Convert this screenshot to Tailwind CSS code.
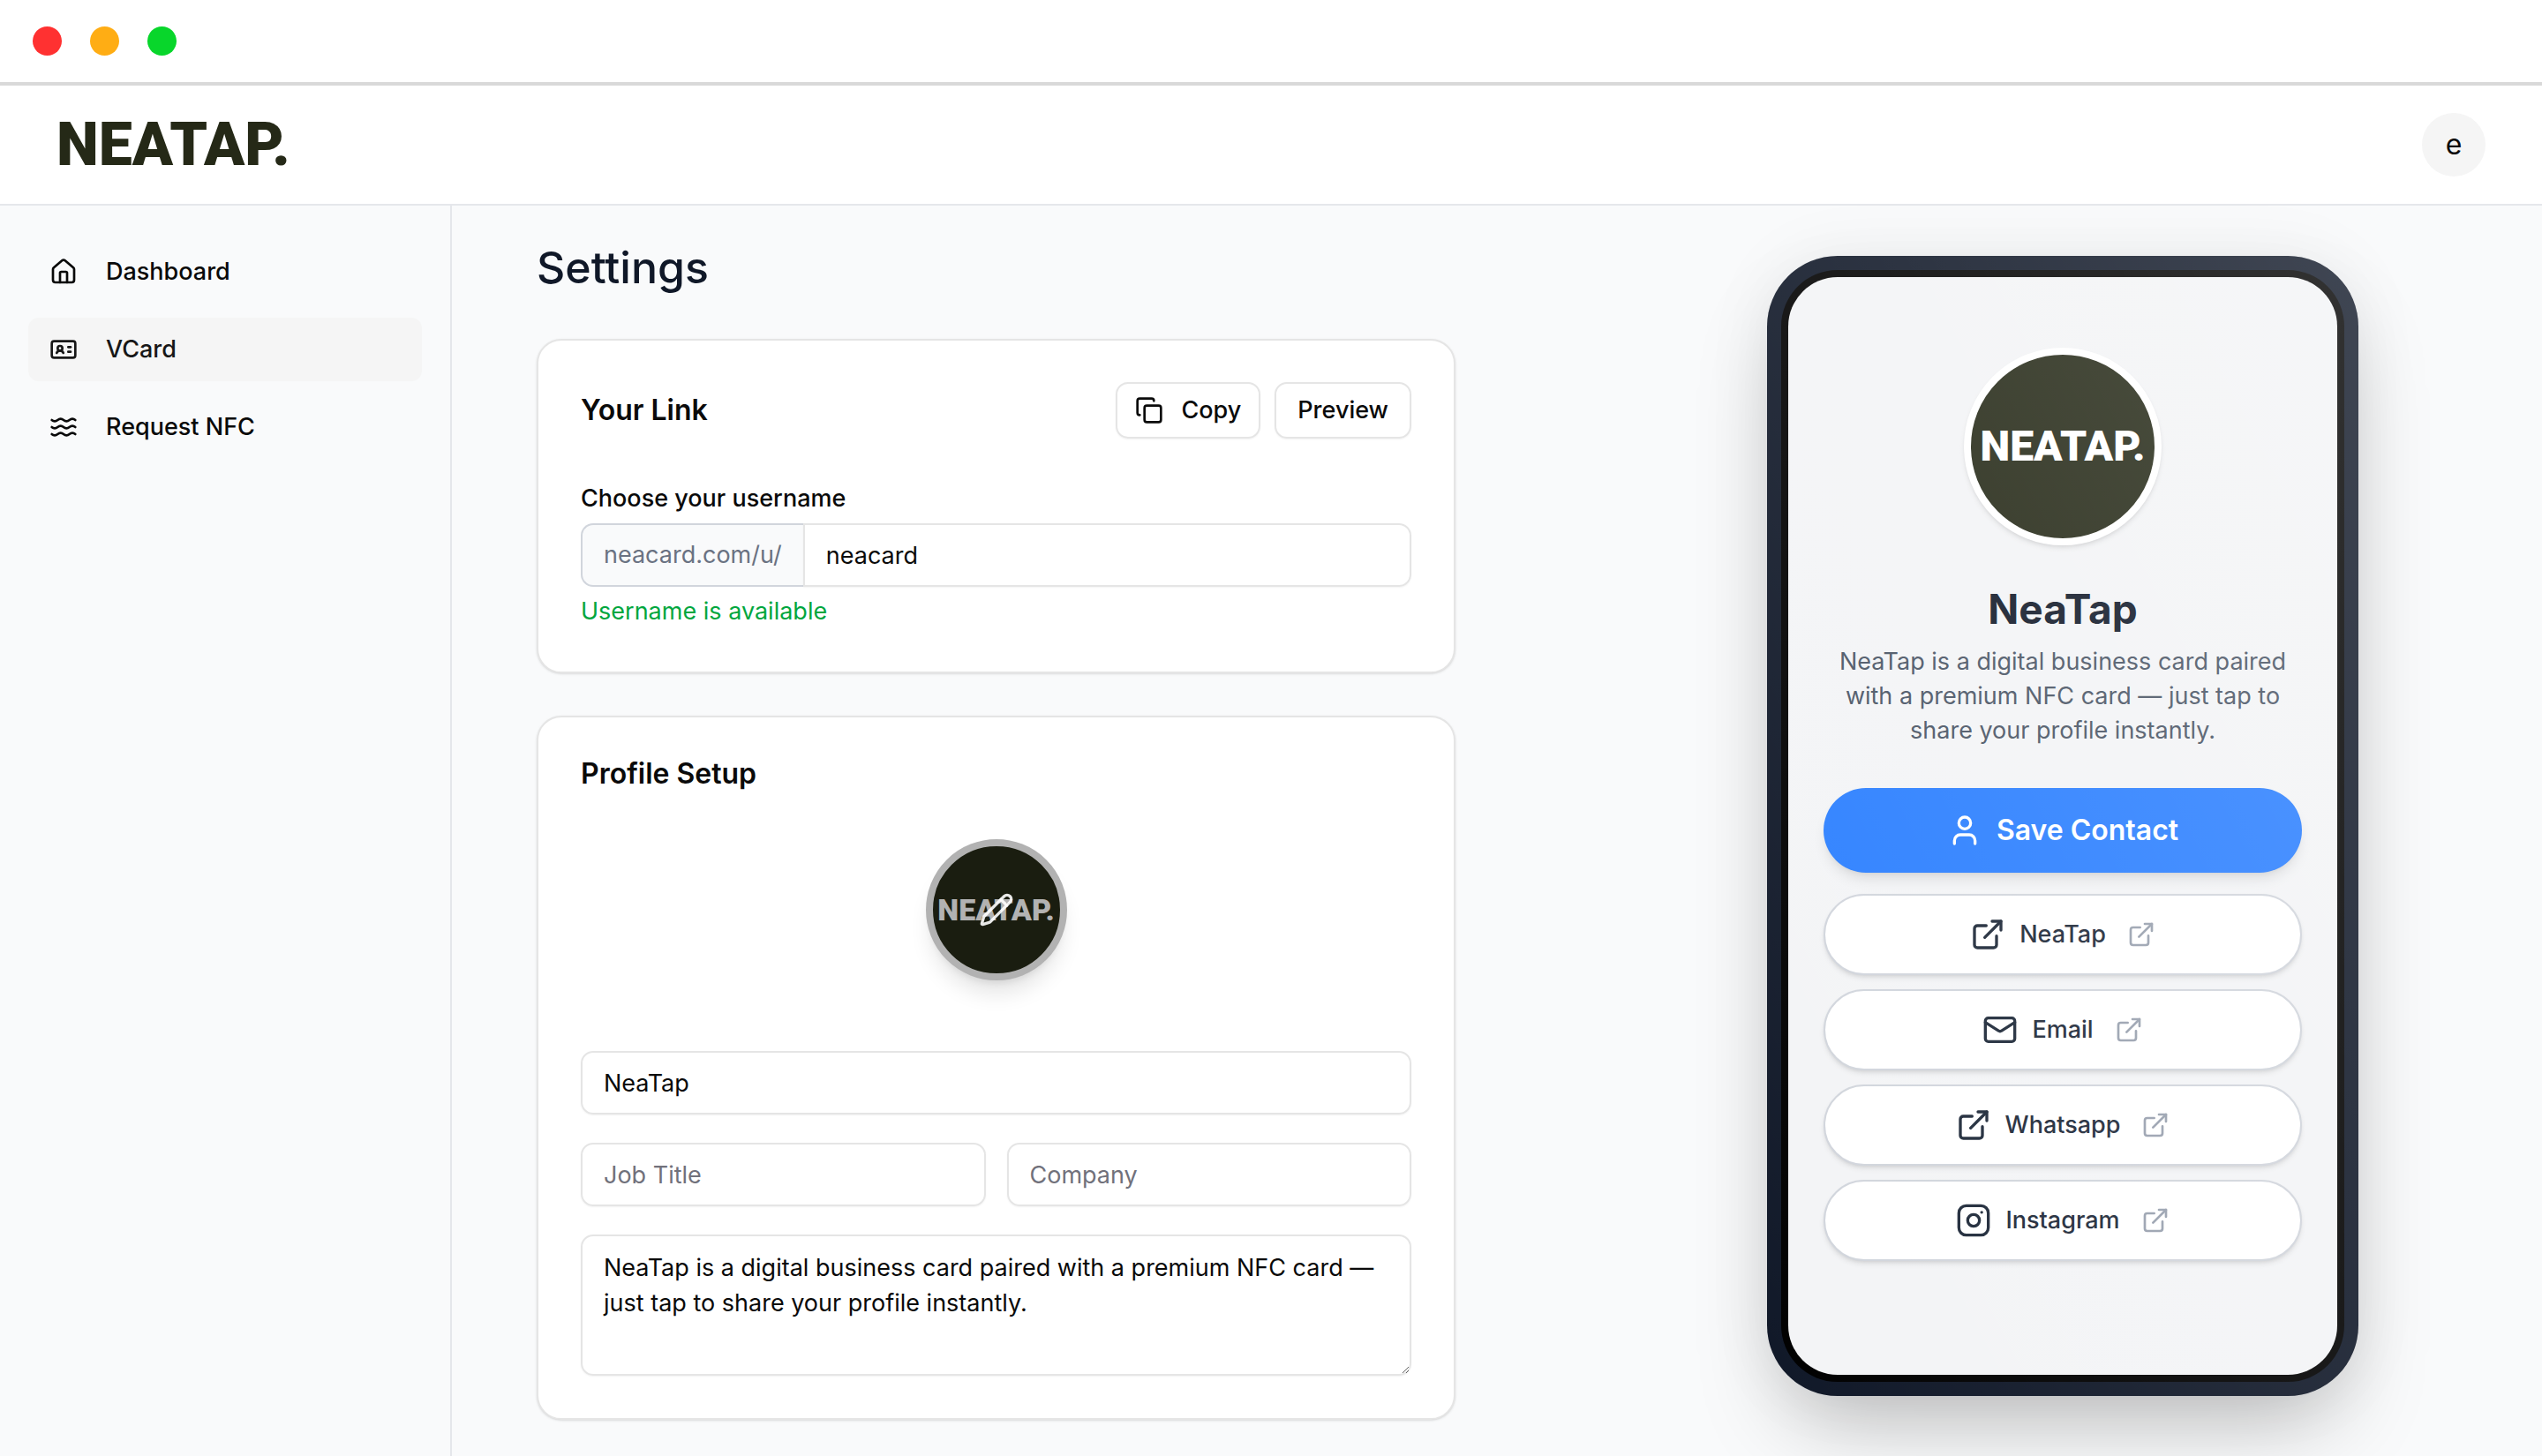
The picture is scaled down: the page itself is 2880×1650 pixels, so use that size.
<!DOCTYPE html>
<html lang="en">
<head>
    <meta charset="UTF-8">
    <meta name="viewport" content="width=device-width, initial-scale=1.0">
    <title>Settings - NeaTap</title>
    <script src="https://cdn.jsdelivr.net/npm/@tailwindcss/browser@4"></script>
</head>
<body class="min-h-screen flex flex-col bg-gray-50 font-['Inter',sans-serif] text-[27px] leading-[40px] text-neutral-950">
    <!-- Icons -->
    <svg class="hidden" aria-hidden="true">
        <symbol id="icon-external" viewBox="0 0 24 24">
            <path d="M15 3h6v6"/>
            <path d="M10 14 21 3"/>
            <path d="M18 13v6a2 2 0 0 1-2 2H5a2 2 0 0 1-2-2V8a2 2 0 0 1 2-2h6"/>
        </symbol>
    </svg>

    <!-- Window bar -->
    <div class="flex items-center gap-8 h-[97px] px-[37px] bg-white border-b-4 border-[#d9d9d9]">
        <span class="size-[33px] rounded-full bg-[#ff3131]"></span>
        <span class="size-[33px] rounded-full bg-[#ffad14]"></span>
        <span class="size-[33px] rounded-full bg-[#08d62b]"></span>
    </div>

    <header class="flex items-center justify-between h-[136px] px-16 bg-white border-b-2 border-gray-200">
        <a href="#" class="font-['Roboto',sans-serif] font-black text-[68px] leading-[68px] text-[#252917]">NEATAP.</a>
        <button type="button" class="size-[72px] rounded-full bg-neutral-100 text-[32px]">e</button>
    </header>

    <div class="flex flex-1">
        <aside class="w-[512px] shrink-0 border-r-2 border-gray-200 px-8 py-[39px]">
            <nav class="flex flex-col gap-4 font-medium">
                <a href="#" class="flex items-center gap-8 h-[72px] px-6 rounded-xl">
                    <svg class="size-8" viewBox="0 0 24 24" fill="none" stroke="currentColor" stroke-width="2" stroke-linecap="round" stroke-linejoin="round">
                        <path d="M15 21v-8a1 1 0 0 0-1-1h-4a1 1 0 0 0-1 1v8"/>
                        <path d="M3 10a2 2 0 0 1 .709-1.528l7-5.999a2 2 0 0 1 2.582 0l7 5.999A2 2 0 0 1 21 10v9a2 2 0 0 1-2 2H5a2 2 0 0 1-2-2z"/>
                    </svg>
                    Dashboard
                </a>
                <a href="#" class="flex items-center gap-8 h-[72px] px-6 rounded-xl bg-neutral-100 text-neutral-900">
                    <svg class="size-8" viewBox="0 0 24 24" fill="none" stroke="currentColor" stroke-width="2" stroke-linecap="round" stroke-linejoin="round">
                        <path d="M16 10h2"/>
                        <path d="M16 14h2"/>
                        <path d="M6.17 15a3 3 0 0 1 5.66 0"/>
                        <circle cx="9" cy="11" r="2"/>
                        <rect x="2" y="5" width="20" height="14" rx="2"/>
                    </svg>
                    VCard
                </a>
                <a href="#" class="flex items-center gap-8 h-[72px] px-6 rounded-xl">
                    <svg class="size-8" viewBox="0 0 24 24" fill="none" stroke="currentColor" stroke-width="2" stroke-linecap="round" stroke-linejoin="round">
                        <path d="M2 6c.6.5 1.2 1 2.5 1C7 7 7 5 9.5 5c2.6 0 2.4 2 5 2 2.5 0 2.5-2 5-2 1.3 0 1.9.5 2.5 1"/>
                        <path d="M2 12c.6.5 1.2 1 2.5 1 2.5 0 2.5-2 5-2 2.6 0 2.4 2 5 2 2.5 0 2.5-2 5-2 1.3 0 1.9.5 2.5 1"/>
                        <path d="M2 18c.6.5 1.2 1 2.5 1 2.5 0 2.5-2 5-2 2.6 0 2.4 2 5 2 2.5 0 2.5-2 5-2 1.3 0 1.9.5 2.5 1"/>
                    </svg>
                    Request NFC
                </a>
            </nav>
        </aside>

        <main class="flex-1 flex justify-between pl-24 pr-52">
            <div class="w-[1041px] pt-[34px] pb-10">
                <h1 class="mb-[45px] text-[50px] leading-[72px] font-medium text-gray-900">Settings</h1>

                <!-- Your link -->
                <section class="mb-12 p-12 pt-[47px] bg-white rounded-[28px] border-2 border-neutral-200 shadow-sm">
                    <div class="flex items-center gap-4 mb-12">
                        <h2 class="mr-auto text-[32px] font-semibold">Your Link</h2>
                        <button type="button" class="flex items-center gap-5 h-16 px-5 rounded-[14px] border-2 border-neutral-200 shadow-xs font-medium">
                            <svg class="size-8" viewBox="0 0 24 24" fill="none" stroke="currentColor" stroke-width="2" stroke-linecap="round" stroke-linejoin="round">
                                <rect x="8" y="8" width="14" height="14" rx="2"/>
                                <path d="M4 16c-1.1 0-2-.9-2-2V4c0-1.1.9-2 2-2h10c1.1 0 2 .9 2 2"/>
                            </svg>
                            Copy
                        </button>
                        <button type="button" class="h-16 px-6 rounded-[14px] border-2 border-neutral-200 shadow-xs font-medium">Preview</button>
                    </div>
                    <label for="username" class="block mb-2 font-medium">Choose your username</label>
                    <div class="flex mb-2">
                        <span class="flex items-center h-[72px] px-6 rounded-l-[14px] border-2 border-r-0 border-gray-300 bg-gray-50 text-gray-500">neacard.com/u/</span>
                        <input type="text" id="username" value="neacard" class="flex-1 min-w-0 h-[72px] px-6 rounded-r-[14px] border-2 border-neutral-200 shadow-xs">
                    </div>
                    <p class="text-green-600">Username is available</p>
                </section>

                <!-- Profile -->
                <section class="p-12 pt-11 bg-white rounded-[28px] border-2 border-neutral-200 shadow-sm">
                    <h2 class="text-[32px] font-semibold">Profile Setup</h2>
                    <button type="button" aria-label="Edit picture" class="relative flex items-center justify-center size-40 mx-auto mt-[54px] mb-20 rounded-full border-8 border-[#b2b2b2] bg-[#1a1d10] shadow-xl">
                        <span class="font-['Roboto',sans-serif] font-black text-[34px] text-[#b2b2b2]">NEATAP.</span>
                        <svg class="absolute size-10 text-white/90" viewBox="0 0 24 24" fill="none" stroke="currentColor" stroke-width="2" stroke-linecap="round" stroke-linejoin="round">
                            <path d="M21.174 6.812a1 1 0 0 0-3.986-3.987L3.842 16.174a2 2 0 0 0-.5.83l-1.321 4.352a.5.5 0 0 0 .623.622l4.353-1.32a2 2 0 0 0 .83-.497z"/>
                            <path d="m15 5 4 4"/>
                        </svg>
                    </button>
                    <form class="grid grid-cols-2 gap-x-6 gap-y-8">
                        <input type="text" aria-label="Name" value="NeaTap" class="col-span-2 h-[72px] px-6 rounded-[14px] border-2 border-neutral-200 shadow-xs">
                        <input type="text" aria-label="Job Title" placeholder="Job Title" class="min-w-0 h-[72px] px-6 rounded-[14px] border-2 border-neutral-200 shadow-xs placeholder:text-zinc-500">
                        <input type="text" aria-label="Company" placeholder="Company" class="min-w-0 h-[72px] px-6 rounded-[14px] border-2 border-neutral-200 shadow-xs placeholder:text-zinc-500">
                        <textarea aria-label="Bio" class="col-span-2 h-40 px-6 py-4 rounded-[14px] border-2 border-neutral-200 shadow-xs">NeaTap is a digital business card paired with a premium NFC card — just tap to share your profile instantly.</textarea>
                    </form>
                </section>
            </div>

            <!-- Phone preview -->
            <div class="relative self-start w-[670px] mt-[57px] p-4 rounded-[80px] bg-gray-900 shadow-[0_50px_100px_-24px_rgba(0,0,0,0.25),0_0_80px_rgba(0,0,0,0.06)]">
                <div class="p-2 rounded-[64px] bg-black">
                    <div class="flex flex-col items-center h-[1244px] px-10 pt-20 rounded-[56px] bg-gray-100">
                        <div class="flex items-center justify-center size-56 rounded-full border-8 border-white bg-[#252917] shadow-md">
                            <span class="font-['Roboto',sans-serif] font-black text-[48px] text-white">NEATAP.</span>
                        </div>
                        <h2 class="mt-10 text-[46px] leading-[64px] font-bold text-gray-900">NeaTap</h2>
                        <p class="mt-2 mb-[46px] text-center leading-[39px] text-gray-600">NeaTap is a digital business card paired with a premium NFC card — just tap to share your profile instantly.</p>
                        <a href="#" class="flex items-center justify-center gap-4 w-full h-24 mb-6 rounded-full bg-blue-500 text-white text-[32px] font-semibold shadow-lg">
                            <svg class="size-10" viewBox="0 0 24 24" fill="none" stroke="currentColor" stroke-width="2" stroke-linecap="round" stroke-linejoin="round">
                                <path d="M19 21v-2a4 4 0 0 0-4-4H9a4 4 0 0 0-4 4v2"/>
                                <circle cx="12" cy="7" r="4"/>
                            </svg>
                            Save Contact
                        </a>
                        <div class="flex flex-col gap-4 w-full font-medium text-gray-800">
                            <a href="#" class="flex items-center justify-center gap-4 h-[92px] rounded-full border-2 border-gray-300 bg-white shadow-md">
                                <svg class="size-10" fill="none" stroke="currentColor" stroke-width="2" stroke-linecap="round" stroke-linejoin="round"><use href="#icon-external"/></svg>
                                NeaTap
                                <svg class="size-8 ml-2 text-gray-400" fill="none" stroke="currentColor" stroke-width="2" stroke-linecap="round" stroke-linejoin="round"><use href="#icon-external"/></svg>
                            </a>
                            <a href="#" class="flex items-center justify-center gap-4 h-[92px] rounded-full border-2 border-gray-300 bg-white shadow-md">
                                <svg class="size-10" viewBox="0 0 24 24" fill="none" stroke="currentColor" stroke-width="2" stroke-linecap="round" stroke-linejoin="round">
                                    <rect x="2" y="4" width="20" height="16" rx="2"/>
                                    <path d="m22 7-8.97 5.7a1.94 1.94 0 0 1-2.06 0L2 7"/>
                                </svg>
                                Email
                                <svg class="size-8 ml-2 text-gray-400" fill="none" stroke="currentColor" stroke-width="2" stroke-linecap="round" stroke-linejoin="round"><use href="#icon-external"/></svg>
                            </a>
                            <a href="#" class="flex items-center justify-center gap-4 h-[92px] rounded-full border-2 border-gray-300 bg-white shadow-md">
                                <svg class="size-10" fill="none" stroke="currentColor" stroke-width="2" stroke-linecap="round" stroke-linejoin="round"><use href="#icon-external"/></svg>
                                Whatsapp
                                <svg class="size-8 ml-2 text-gray-400" fill="none" stroke="currentColor" stroke-width="2" stroke-linecap="round" stroke-linejoin="round"><use href="#icon-external"/></svg>
                            </a>
                            <a href="#" class="flex items-center justify-center gap-4 h-[92px] rounded-full border-2 border-gray-300 bg-white shadow-md">
                                <svg class="size-10" viewBox="0 0 24 24" fill="none" stroke="currentColor" stroke-width="2" stroke-linecap="round" stroke-linejoin="round">
                                    <rect x="2" y="2" width="20" height="20" rx="5"/>
                                    <circle cx="12" cy="12" r="4"/>
                                    <path d="M17.5 6.5h.01"/>
                                </svg>
                                Instagram
                                <svg class="size-8 ml-2 text-gray-400" fill="none" stroke="currentColor" stroke-width="2" stroke-linecap="round" stroke-linejoin="round"><use href="#icon-external"/></svg>
                            </a>
                        </div>
                    </div>
                </div>
                <!-- Glass reflection -->
                <div class="absolute inset-0 rounded-[80px] bg-linear-to-tr from-transparent to-white/20 pointer-events-none"></div>
            </div>
        </main>
    </div>
</body>
</html>
